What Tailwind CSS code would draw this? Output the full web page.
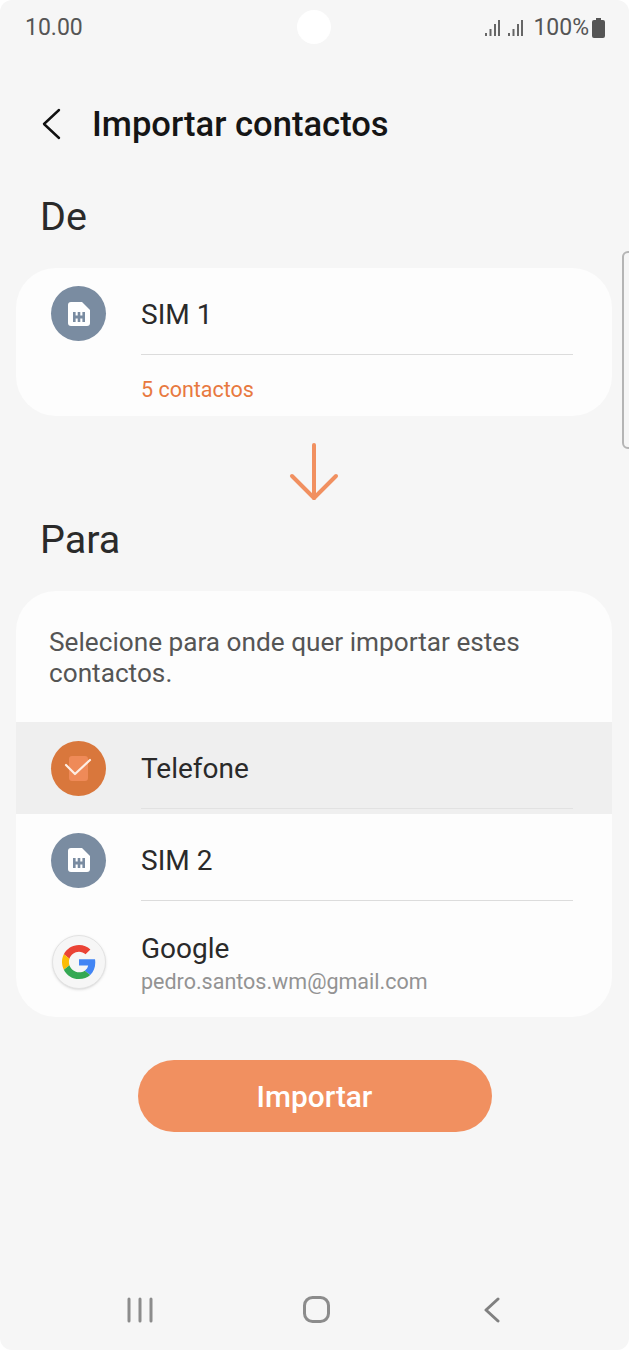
<!DOCTYPE html>
<html lang="pt">
<head>
  <meta charset="UTF-8" />
  <meta name="viewport" content="width=device-width, initial-scale=1.0"/>
  <title>Importar contactos</title>
  <script src="https://cdn.jsdelivr.net/npm/@tailwindcss/browser@4"></script>
</head>
<body class="bg-white font-['Roboto',sans-serif]">
  <div class="relative w-[629px] h-[1350px] overflow-hidden rounded-[12px] bg-[#f6f6f6] flex flex-col">

    <!-- status bar -->
    <div class="h-[54px] pt-[2px] pl-[25px] pr-[24px] flex items-center justify-between text-[#555555] text-[23px]">
      <span>10.00</span>
      <div class="flex items-center">
        <svg width="18" height="18" viewBox="0 0 18 18" fill="#666666"><rect x="1" y="14" width="2" height="3"/><rect x="5.500" y="10" width="2" height="7"/><rect x="10" y="5" width="2" height="12"/><rect x="14" y="1" width="2" height="16"/></svg>
        <svg class="ml-[5px]" width="18" height="18" viewBox="0 0 18 18" fill="#666666"><rect x="1" y="14" width="2" height="3"/><rect x="5.500" y="10" width="2" height="7"/><rect x="10" y="5" width="2" height="12"/><rect x="14" y="1" width="2" height="16"/></svg>
        <span class="ml-[8px]">100%</span>
        <svg class="ml-[3px]" width="13" height="20" viewBox="0 0 13 20" fill="#555555"><path d="M4 0h5v2h2a2 2 0 0 1 2 2v14a2 2 0 0 1-2 2H2a2 2 0 0 1-2-2V4a2 2 0 0 1 2-2h2z"/></svg>
      </div>
    </div>
    <div class="absolute left-[297px] top-[10px] w-[34px] h-[34px] rounded-full bg-white"></div>

    <!-- header -->
    <div class="mt-[46px] h-[48px] flex items-center pl-[40px]">
      <svg width="24" height="34" viewBox="0 0 24 34" fill="none" stroke="#111111" stroke-width="2.400" stroke-linecap="round" stroke-linejoin="round"><path d="M19 3 L4 17 L19 31"/></svg>
      <h1 class="ml-[28px] text-[34.600px] font-medium text-[#151515] leading-none">Importar contactos</h1>
    </div>

    <h2 class="mt-[45px] ml-[40px] h-[48px] leading-[48px] text-[39.500px] text-[#2a2a2a]">De</h2>

    <!-- origem -->
    <div class="mt-[27px] ml-[16px] mr-[17px] h-[148px] rounded-[40px] bg-[#fdfdfd] pl-[35px] pr-[39px]">
      <div class="h-[86px] flex items-start pt-[18px]">
        <div class="w-[55px] h-[55px] rounded-full bg-[#7a8ca1] flex items-center justify-center">
          <svg width="22" height="24" viewBox="0 0 22 24" fill="#ffffff"><path d="M3 0h11l8 8v13a3 3 0 0 1-3 3H3a3 3 0 0 1-3-3V3a3 3 0 0 1 3-3z"/><g fill="#7a8ca1"><rect x="5" y="10" width="2.600" height="10"/><rect x="9.700" y="10" width="2.600" height="10"/><rect x="14.400" y="10" width="2.600" height="10"/><rect x="5" y="13.500" width="12" height="3"/></g></svg>
        </div>
        <span class="ml-[35px] mt-[10px] text-[28px] text-[#2a2a2a] leading-[38px]">SIM 1</span>
      </div>
      <div class="ml-[90px] h-px bg-[#dcdcdc]"></div>
      <div class="ml-[90px] mt-[22px] text-[21.500px] leading-[26px] text-[#e8793f]">5 contactos</div>
    </div>

    <!-- seta -->
    <div class="mt-[27px] flex justify-center">
      <svg class="-ml-[2px]" width="50" height="58" viewBox="0 0 50 58" fill="none" stroke="#f19060" stroke-width="4" stroke-linecap="round" stroke-linejoin="round"><path d="M25 2 V55"/><path d="M3 33 L25 55 L47 33"/></svg>
    </div>

    <h2 class="mt-[15px] ml-[40px] h-[48px] leading-[48px] text-[39.500px] text-[#2a2a2a]">Para</h2>

    <!-- destino -->
    <div class="mt-[27px] ml-[16px] mr-[17px] h-[426px] rounded-[40px] bg-[#fdfdfd] overflow-hidden">
      <p class="pt-[36px] pl-[33px] pr-[40px] h-[131px] text-[26.200px] leading-[31px] text-[#555555]">Selecione para onde quer importar estes contactos.</p>

      <div class="h-[92px] bg-[#efefef] pl-[35px] pr-[39px] flex items-center relative">
        <div class="w-[55px] h-[55px] rounded-full bg-[#d9773c] flex items-center justify-center relative">
          <div class="w-[19px] h-[25px] rounded-[3px] bg-[#ef8a58]"></div>
          <svg class="absolute left-[13px] top-[17px]" width="28" height="20" viewBox="0 0 28 20" fill="none" stroke="#fdeee4" stroke-width="2.200" stroke-linecap="round" stroke-linejoin="round"><path d="M2 7 L11 16 L26 2"/></svg>
        </div>
        <span class="ml-[35px] mt-[1px] text-[28px] text-[#2a2a2a]">Telefone</span>
        <div class="absolute left-[125px] right-[39px] bottom-[5px] h-px bg-[#e2e2e2]"></div>
      </div>

      <div class="h-[92px] pl-[35px] pr-[39px] flex items-center relative">
        <div class="w-[55px] h-[55px] rounded-full bg-[#7a8ca1] flex items-center justify-center">
          <svg width="22" height="24" viewBox="0 0 22 24" fill="#ffffff"><path d="M3 0h11l8 8v13a3 3 0 0 1-3 3H3a3 3 0 0 1-3-3V3a3 3 0 0 1 3-3z"/><g fill="#7a8ca1"><rect x="5" y="10" width="2.600" height="10"/><rect x="9.700" y="10" width="2.600" height="10"/><rect x="14.400" y="10" width="2.600" height="10"/><rect x="5" y="13.500" width="12" height="3"/></g></svg>
        </div>
        <span class="ml-[35px] mt-[1px] text-[28px] text-[#2a2a2a]">SIM 2</span>
        <div class="absolute left-[125px] right-[39px] bottom-[5px] h-px bg-[#dcdcdc]"></div>
      </div>

      <div class="h-[111px] pl-[35px] pr-[39px] flex items-start pt-[29px]">
        <div class="w-[54px] h-[54px] ml-[1px] rounded-full bg-[#f6f6f6] border border-[#e2e2e2] shadow-sm flex items-center justify-center">
          <svg width="34" height="34" viewBox="0 0 48 48"><path fill="#EA4335" d="M24 9.500c3.540 0 6.710 1.220 9.210 3.600l6.850-6.850C35.900 2.380 30.470 0 24 0 14.620 0 6.510 5.380 2.560 13.220l7.980 6.190C12.430 13.720 17.740 9.500 24 9.500z"/><path fill="#4285F4" d="M46.980 24.550c0-1.570-.15-3.090-.38-4.550H24v9.020h12.940c-.58 2.960-2.260 5.480-4.780 7.180l7.730 6c4.510-4.180 7.090-10.360 7.090-17.650z"/><path fill="#FBBC05" d="M10.530 28.590c-.48-1.450-.76-2.990-.76-4.590s.27-3.140.76-4.590l-7.980-6.190C.92 16.460 0 20.120 0 24c0 3.880.92 7.540 2.560 10.780l7.970-6.190z"/><path fill="#34A853" d="M24 48c6.480 0 11.930-2.130 15.890-5.810l-7.730-6c-2.150 1.450-4.920 2.300-8.160 2.300-6.260 0-11.570-4.220-13.470-9.910l-7.980 6.190C6.510 42.620 14.620 48 24 48z"/></svg>
        </div>
        <div class="ml-[35px] -mt-[3px]">
          <div class="text-[28px] leading-[34px] text-[#2a2a2a]">Google</div>
          <div class="text-[21.500px] leading-[32px] text-[#939393]">pedro.santos.wm@gmail.com</div>
        </div>
      </div>
    </div>

    <!-- botao -->
    <div class="mt-[43px] flex justify-center">
      <button class="w-[354px] h-[72px] pt-[3px] rounded-full bg-[#f19060] text-white text-[29.800px] font-medium">Importar</button>
    </div>

    <!-- navegacao -->
    <div class="mt-auto mb-[24px] h-[32px] flex items-center pl-[127px]">
      <svg width="26" height="26" viewBox="0 0 26 26" fill="none" stroke="#8c8c8c" stroke-width="3" stroke-linecap="round"><path d="M2 2V24M13 2V24M24 2V24"/></svg>
      <svg class="ml-[150px] -mt-[1px]" width="27" height="27" viewBox="0 0 27 27" fill="none" stroke="#8c8c8c" stroke-width="3"><rect x="1.500" y="1.500" width="24" height="24" rx="8"/></svg>
      <svg class="ml-[154px]" width="16" height="26" viewBox="0 0 16 26" fill="none" stroke="#808080" stroke-width="3" stroke-linecap="round" stroke-linejoin="round"><path d="M14 2 L2 13 L14 24"/></svg>
    </div>

    <!-- alça lateral -->
    <div class="absolute left-[622px] top-[251px] w-[12px] h-[198px] rounded-[6px] border-2 border-[#b5b5b5]"></div>
  </div>
</body>
</html>
